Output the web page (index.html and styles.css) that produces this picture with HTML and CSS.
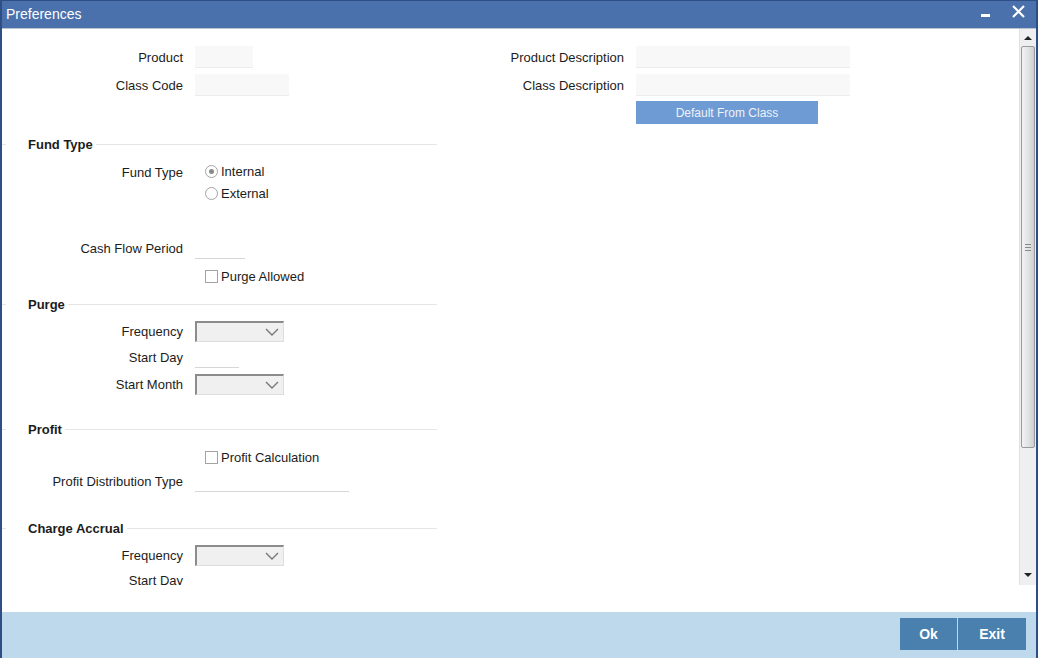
FILE: index.html
```html
<!DOCTYPE html>
<html lang="en">
<head>
    <meta charset="UTF-8">
    <title>Preferences</title>
    <link rel="stylesheet" href="styles.css">
</head>
<body>
    <div class="window">
        <div class="titlebar">
            <span class="title">Preferences</span>
            <span class="win-btns">
                <span class="win-min"></span>
                <svg class="win-close" width="13" height="13" viewBox="0 0 13 13"><path d="M1 1L12 12M12 1L1 12" stroke="#fff" stroke-width="2.2"/></svg>
            </span>
        </div>

        <div class="body">
            <div class="scroll">
                <div class="top">
                    <div class="col-left">
                        <div class="row">
                            <label class="lbl">Product</label>
                            <span class="field ro w58"></span>
                        </div>
                        <div class="row mt6">
                            <label class="lbl">Class Code</label>
                            <span class="field ro w94"></span>
                        </div>
                    </div>
                    <div class="col-right">
                        <div class="row">
                            <label class="lbl">Product Description</label>
                            <span class="field ro w214"></span>
                        </div>
                        <div class="row mt6">
                            <label class="lbl">Class Description</label>
                            <span class="field ro w214"></span>
                        </div>
                        <div class="btn-row">
                            <button class="btn-default">Default From Class</button>
                        </div>
                    </div>
                </div>

                <!-- Fund Type -->
                <div class="legend mt10"><span class="tick"></span><span class="legend-text">Fund Type</span><span class="rule"></span></div>
                <div class="row row-top mt6">
                    <label class="lbl">Fund Type</label>
                    <div class="radios">
                        <div class="opt"><span class="radio checked"></span>Internal</div>
                        <div class="opt"><span class="radio"></span>External</div>
                    </div>
                </div>
                <div class="row mt33">
                    <label class="lbl">Cash Flow Period</label>
                    <span class="field line w50"></span>
                </div>
                <div class="row mt6">
                    <span class="lbl"></span>
                    <div class="opt"><span class="check"></span>Purge Allowed</div>
                </div>

                <!-- Purge -->
                <div class="legend mt7"><span class="tick"></span><span class="legend-text">Purge</span><span class="rule"></span></div>
                <div class="row mt6">
                    <label class="lbl">Frequency</label>
                    <span class="select"><svg width="14" height="8" viewBox="0 0 14 8"><path d="M1 1L7 7L13 1" fill="none" stroke="#777" stroke-width="1.4"/></svg></span>
                </div>
                <div class="row mt4">
                    <label class="lbl">Start Day</label>
                    <span class="field line w44"></span>
                </div>
                <div class="row mt5">
                    <label class="lbl">Start Month</label>
                    <span class="select"><svg width="14" height="8" viewBox="0 0 14 8"><path d="M1 1L7 7L13 1" fill="none" stroke="#777" stroke-width="1.4"/></svg></span>
                </div>

                <!-- Profit -->
                <div class="legend mt24"><span class="tick"></span><span class="legend-text">Profit</span><span class="rule"></span></div>
                <div class="row mt7">
                    <span class="lbl"></span>
                    <div class="opt"><span class="check"></span>Profit Calculation</div>
                </div>
                <div class="row mt2">
                    <label class="lbl">Profit Distribution Type</label>
                    <span class="field line w154"></span>
                </div>

                <!-- Charge Accrual -->
                <div class="legend mt26"><span class="tick"></span><span class="legend-text">Charge Accrual</span><span class="rule"></span></div>
                <div class="row mt6">
                    <label class="lbl">Frequency</label>
                    <span class="select"><svg width="14" height="8" viewBox="0 0 14 8"><path d="M1 1L7 7L13 1" fill="none" stroke="#777" stroke-width="1.4"/></svg></span>
                </div>
                <div class="row mt3">
                    <label class="lbl">Start Day</label>
                    <span class="field line w44"></span>
                </div>
            </div>

            <div class="scrollbar">
                <span class="arrow up"></span>
                <div class="thumb"><span class="grip"></span></div>
                <div class="track"></div>
                <span class="arrow down"></span>
            </div>
        </div>

        <div class="footer">
            <button class="foot-btn ok">Ok</button>
            <button class="foot-btn exit">Exit</button>
        </div>
    </div>
</body>
</html>
```

FILE: styles.css
```css
html, body {
    margin: 0;
    padding: 0;
    background: #fff;
}

body {
    font-family: "Liberation Sans", Arial, sans-serif;
    font-size: 13px;
    color: #1c1c1c;
}

.window {
    width: 1038px;
    height: 658px;
    box-sizing: border-box;
    border-left: 2px solid #2d4f86;
    border-right: 2px solid #2d4f86;
    display: flex;
    flex-direction: column;
    overflow: hidden;
}

/* title bar */
.titlebar {
    height: 29px;
    background-color: #4a71ab;
    border-top: 1px solid #2d4f86;
    border-bottom: 1px solid #b9c3cf;
    box-sizing: border-box;
    display: flex;
    align-items: center;
    justify-content: space-between;
    padding: 0 11px 0 4px;
    flex-shrink: 0;
}

.title {
    color: #fff;
    font-size: 14px;
    margin-top: -1px;
}

.win-btns {
    display: flex;
    align-items: center;
    margin-top: -7px;
}

.win-min {
    display: inline-block;
    width: 9px;
    height: 3px;
    background: #fff;
    margin-right: 22px;
    margin-top: 8px;
}

/* body */
.body {
    display: flex;
    height: 556px;
    flex-shrink: 0;
}

.scroll {
    flex: 1;
    overflow: hidden;
    padding-top: 17px;
}

.top {
    display: flex;
}

.col-left {
    width: 438px;
}

.col-right {
    flex: 1;
}

.row {
    display: flex;
    align-items: center;
    height: 22px;
}

.row-top {
    align-items: flex-start;
    height: auto;
}

.lbl {
    width: 181px;
    text-align: right;
    margin-right: 12px;
    line-height: 22px;
    padding-top: 2px;
    flex-shrink: 0;
}

.col-right .lbl {
    width: 184px;
}

.field {
    display: inline-block;
    height: 22px;
    box-sizing: border-box;
}

.field.ro {
    background: #f8f8f8;
    border-bottom: 1px solid #ececec;
}

.field.line {
    border-bottom: 1px solid #d6d6d6;
}

.w44 { width: 44px; }
.w50 { width: 50px; }
.w58 { width: 58px; }
.w94 { width: 94px; }
.w154 { width: 154px; }
.w214 { width: 214px; }

.mt2 { margin-top: 2px; }
.mt3 { margin-top: 3px; }
.mt4 { margin-top: 4px; }
.mt5 { margin-top: 5px; }
.mt6 { margin-top: 6px; }
.mt7 { margin-top: 7px; }
.mt10 { margin-top: 10px; }
.mt24 { margin-top: 24px; }
.mt26 { margin-top: 26px; }
.mt33 { margin-top: 33px; }

.btn-row {
    margin-top: 5px;
    padding-left: 196px;
}

.btn-default {
    width: 182px;
    height: 23px;
    border: none;
    background-color: #6f9bd4;
    color: #eef2f7;
    font-family: "Liberation Sans", Arial, sans-serif;
    font-size: 12px;
    padding: 1px 0 0;
}

/* section headers */
.legend {
    display: flex;
    align-items: center;
    width: 435px;
    height: 20px;
}

.legend .tick {
    width: 4px;
    border-top: 1px solid #e6e6e6;
}

.legend-text {
    font-weight: bold;
    margin-left: 22px;
    margin-right: 3px;
    padding-top: 1px;
}

.legend .rule {
    flex: 1;
    border-top: 1px solid #e6e6e6;
}

/* radios & checkboxes */
.radios {
    display: flex;
    flex-direction: column;
    margin-left: 10px;
}

.opt {
    display: flex;
    align-items: center;
    height: 21px;
    padding-top: 1px;
}

.row .opt {
    margin-left: 10px;
}

.radios .opt {
    margin-left: 0;
}

.radio {
    display: inline-block;
    width: 11px;
    height: 11px;
    border: 1px solid #a3a3a3;
    border-radius: 50%;
    margin-right: 3px;
    position: relative;
    background: #fff;
}

.radio.checked::after {
    content: "";
    position: absolute;
    left: 3px;
    top: 3px;
    width: 5px;
    height: 5px;
    border-radius: 50%;
    background: #8a8a8a;
}

.check {
    display: inline-block;
    width: 11px;
    height: 11px;
    border: 1px solid #a3a3a3;
    margin-right: 3px;
    background: #fff;
}

/* select boxes */
.select {
    width: 89px;
    height: 21px;
    box-sizing: border-box;
    background: #f0f0f0;
    border-top: 2px solid #8c8c8c;
    border-left: 2px solid #8c8c8c;
    border-right: 1px solid #dedede;
    border-bottom: 1px solid #dedede;
    display: flex;
    align-items: center;
    justify-content: flex-end;
    padding-right: 4px;
}

/* fake scrollbar */
.scrollbar {
    width: 16px;
    background: #efefef;
    border-left: 1px solid #e0e0e0;
    display: flex;
    flex-direction: column;
    align-items: center;
}

.arrow {
    width: 0;
    height: 0;
    border-left: 4px solid transparent;
    border-right: 4px solid transparent;
    margin: 6px 0;
}

.arrow.up {
    border-bottom: 4px solid #222;
    margin-top: 7px;
}

.arrow.down {
    border-top: 4px solid #222;
    margin-bottom: 8px;
}

.thumb {
    width: 14px;
    height: 402px;
    box-sizing: border-box;
    border: 1px solid #9a9a9a;
    border-radius: 2px;
    background: linear-gradient(to right, #f2f2f2, #e0e0e0 60%, #cfcfcf);
    display: flex;
    align-items: center;
    justify-content: center;
}

.grip {
    width: 6px;
    height: 5px;
    border-top: 1px solid #888;
    border-bottom: 1px solid #888;
    position: relative;
}

.grip::after {
    content: "";
    position: absolute;
    left: 0;
    right: 0;
    top: 2px;
    border-top: 1px solid #888;
}

.track {
    flex: 1;
}

/* footer */
.footer {
    flex: 1;
    margin-top: 27px;
    background-color: #bed8ec;
    display: flex;
    justify-content: flex-end;
    align-items: flex-start;
    padding: 6px 10px 0 0;
}

.foot-btn {
    height: 32px;
    border: none;
    background-color: #4a80ae;
    color: #fff;
    font-family: "Liberation Sans", Arial, sans-serif;
    font-size: 14px;
    font-weight: bold;
    padding: 0;
}

.foot-btn.ok {
    width: 57px;
    margin-right: 1px;
}

.foot-btn.exit {
    width: 68px;
}
```
